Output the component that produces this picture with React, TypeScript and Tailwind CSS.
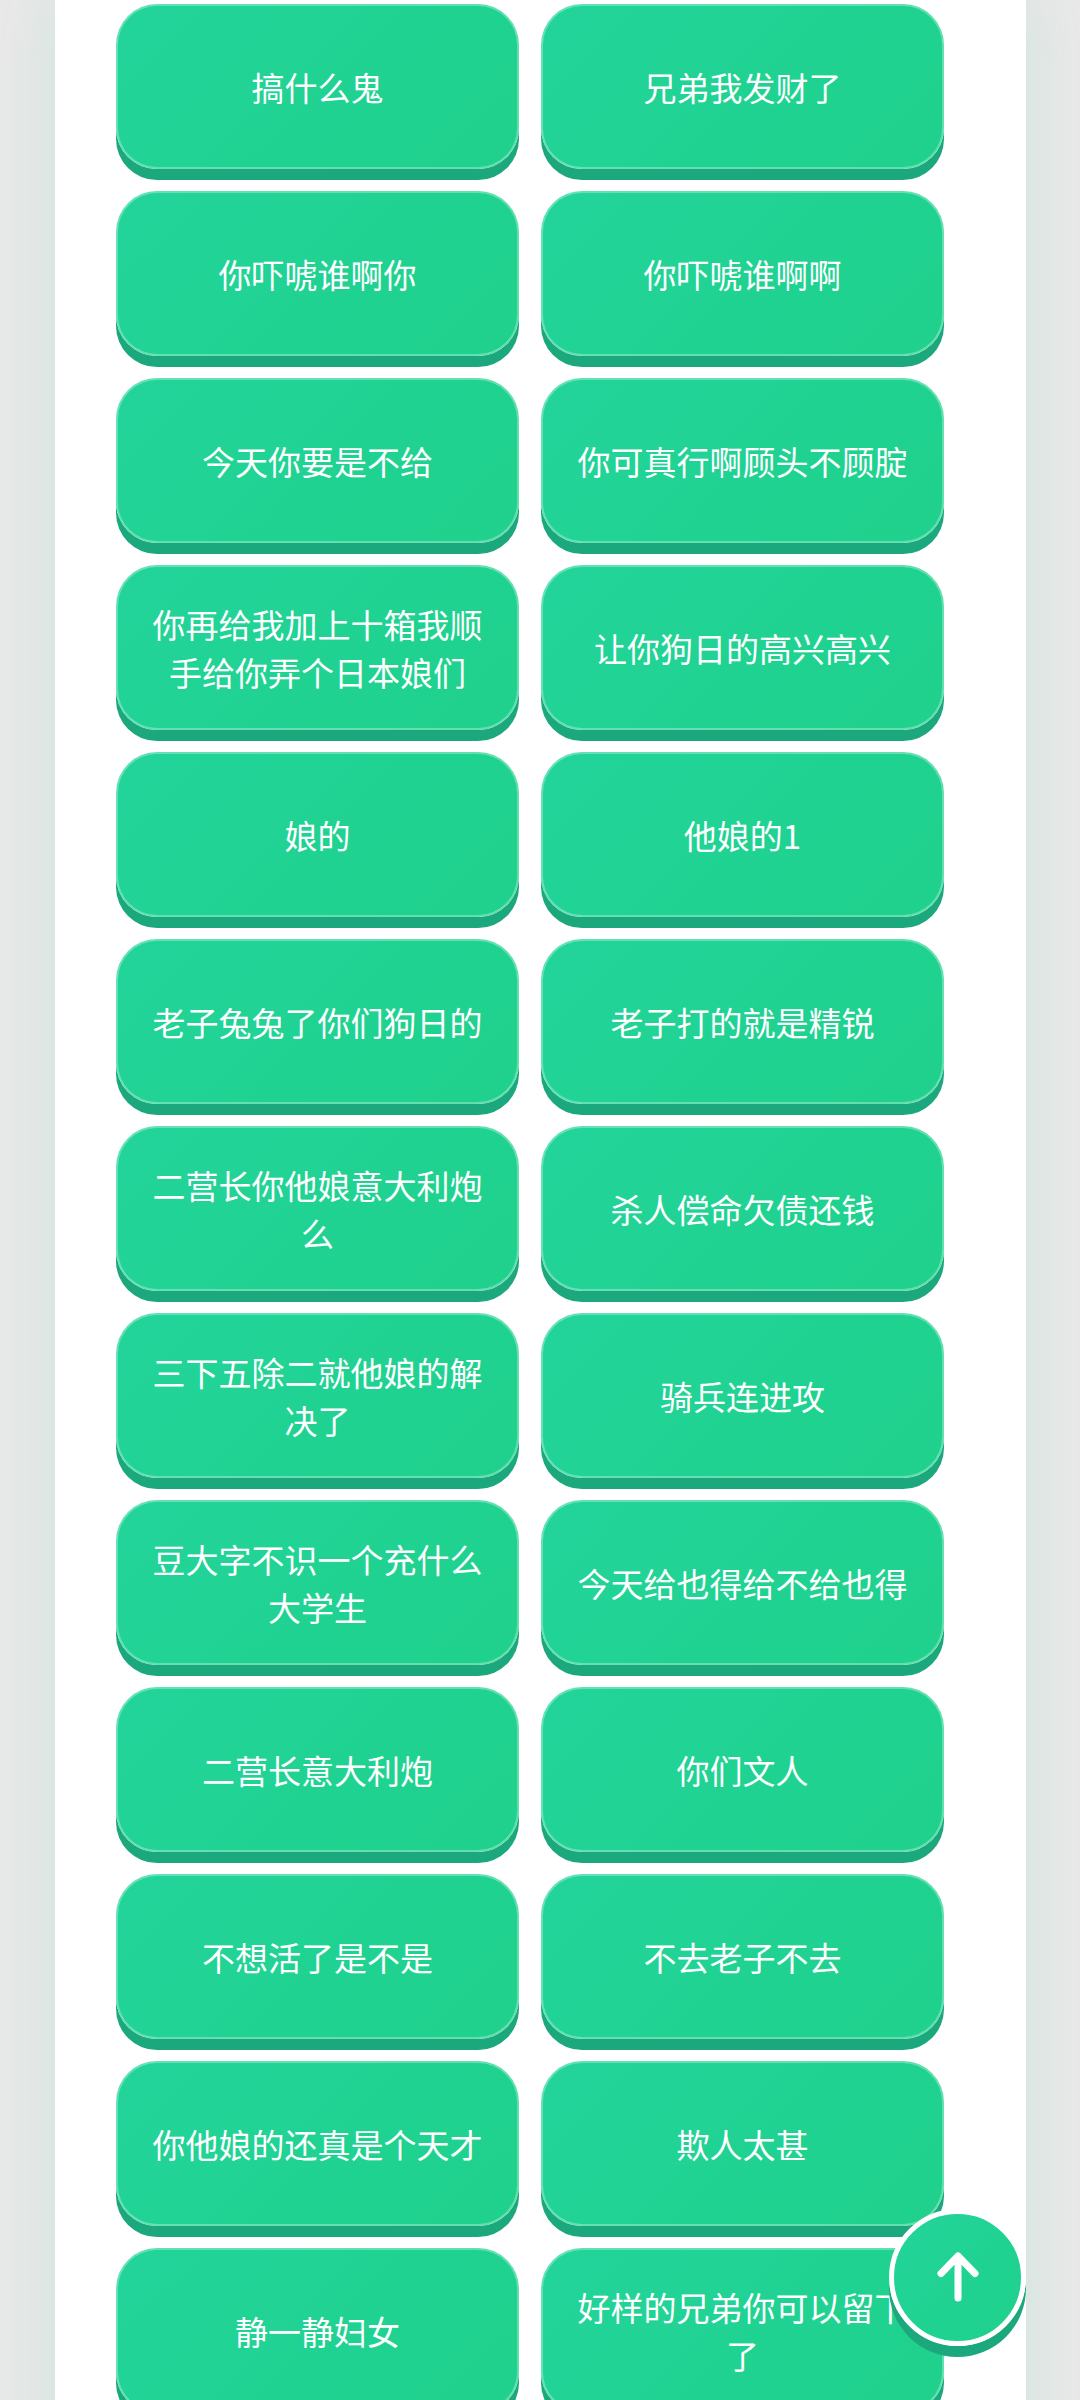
const phrases: string[] = [
  '搞什么鬼', '兄弟我发财了',
  '你吓唬谁啊你', '你吓唬谁啊啊',
  '今天你要是不给', '你可真行啊顾头不顾腚',
  '你再给我加上十箱我顺手给你弄个日本娘们', '让你狗日的高兴高兴',
  '娘的', '他娘的1',
  '老子兔兔了你们狗日的', '老子打的就是精锐',
  '二营长你他娘意大利炮么', '杀人偿命欠债还钱',
  '三下五除二就他娘的解决了', '骑兵连进攻',
  '豆大字不识一个充什么大学生', '今天给也得给不给也得',
  '二营长意大利炮', '你们文人',
  '不想活了是不是', '不去老子不去',
  '你他娘的还真是个天才', '欺人太甚',
  '静一静妇女', '好样的兄弟你可以留下了',
];

function SoundButton({ label }: { label: string }) {
  return (
    <button
      type="button"
      className="flex min-h-[165px] items-center justify-center rounded-[41px] border-2 border-white/30 bg-linear-135 from-[#22d49a] to-[#1fd18b] bg-origin-border px-[31px] text-center text-[33px] leading-[48px] text-white shadow-[0_11px_0_#1ba87d]"
    >
      {label}
    </button>
  );
}

function BackToTop() {
  return (
    <button
      type="button"
      aria-label="返回顶部"
      className="fixed right-[54px] bottom-[54px] flex size-[137px] items-center justify-center rounded-full border-[5px] border-white bg-linear-135 from-[#22d49a] to-[#1fd18b] shadow-[0_11px_0_#1ba87d]"
    >
      <svg
        className="size-16"
        viewBox="0 0 64 64"
        fill="none"
        stroke="#fff"
        strokeWidth="7"
        strokeLinecap="round"
        strokeLinejoin="round"
        aria-hidden="true"
      >
        <path d="M32 52V10M15 27.500 32 10l17 17.500" />
      </svg>
    </button>
  );
}

export default function App() {
  return (
    <div className="h-screen overflow-hidden bg-[#e8e8e8] pr-[54px] pl-[55px] font-['Noto_Sans_CJK_SC',sans-serif]">
      <main className="min-h-full bg-white pt-1 pr-[82px] pb-[55px] pl-[61px] shadow-[0_0_55px_rgba(32,210,150,0.13)]">
        <div className="grid grid-cols-2 gap-[22px]">
          {phrases.map((label) => (
            <SoundButton key={label} label={label} />
          ))}
        </div>
      </main>
      <BackToTop />
    </div>
  );
}
